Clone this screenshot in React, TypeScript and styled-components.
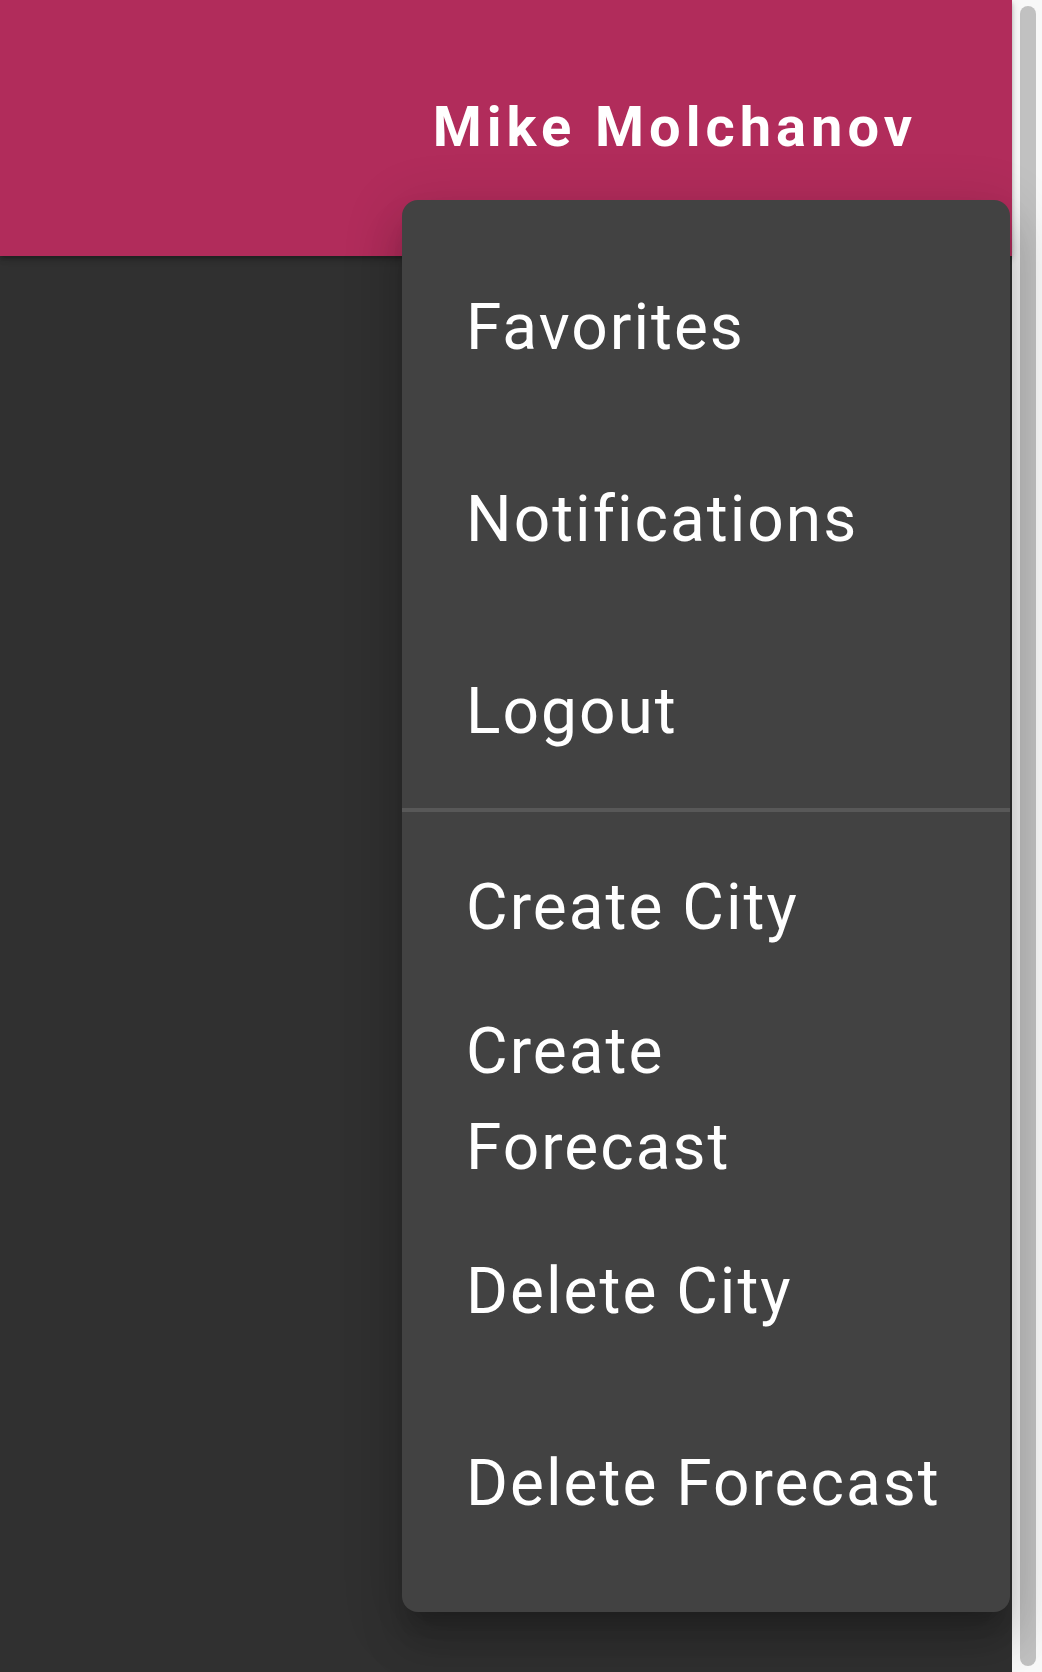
import React from "react";
import styled, { createGlobalStyle } from "styled-components";

const GlobalStyle = createGlobalStyle`
  html, body {
    margin: 0;
    padding: 0;
    height: 100%;
    overflow: hidden;
    background: #303030;
  }
  body {
    font-family: Roboto, "Noto Sans", "Liberation Sans", sans-serif;
    -webkit-font-smoothing: antialiased;
  }
  #root {
    height: 100%;
  }
`;

const Frame = styled.div`
  display: flex;
  height: 100vh;
  width: 100%;
`;

const Viewport = styled.div`
  position: relative;
  flex: 1;
  min-width: 0;
  background: #303030;
`;

const AppBar = styled.header`
  height: 256px;
  display: flex;
  align-items: center;
  justify-content: flex-end;
  padding-right: 95px;
  box-sizing: border-box;
  background: #b12c5b;
  box-shadow: 0 2px 4px -1px rgba(0, 0, 0, 0.2), 0 4px 5px 0 rgba(0, 0, 0, 0.14),
    0 1px 10px 0 rgba(0, 0, 0, 0.12);
`;

const UserName = styled.div`
  color: #ffffff;
  font-size: 56px;
  font-weight: 700;
  letter-spacing: 5px;
  line-height: normal;
  margin-top: -2px;
`;

const MenuPaper = styled.nav`
  position: absolute;
  top: 200px;
  right: 2px;
  width: 608px;
  box-sizing: border-box;
  padding: 32px 0;
  background: #424242;
  border-radius: 16px;
  box-shadow: 0 20px 20px -12px rgba(0, 0, 0, 0.2),
    0 32px 40px 4px rgba(0, 0, 0, 0.14), 0 12px 56px 8px rgba(0, 0, 0, 0.12);
`;

const MenuList = styled.ul`
  list-style: none;
  margin: 0;
  padding: 0;
`;

const MenuItem = styled.li<{ $divider?: boolean }>`
  display: flex;
  align-items: center;
  min-height: 192px;
  box-sizing: content-box;
  padding: 0 64px;
  color: #ffffff;
  font-size: 64px;
  font-weight: 400;
  line-height: 96px;
  letter-spacing: 2px;
  white-space: nowrap;
  border-bottom: ${(p) => (p.$divider ? "4px solid #585858" : "none")};
`;

const ScrollTrack = styled.div`
  width: 30px;
  flex: none;
  display: flex;
  box-sizing: border-box;
  padding: 6px 6px 6px 8px;
  background: #f8f8f8;
`;

const ScrollThumb = styled.div`
  flex: 1;
  background: #c1c1c1;
  border-radius: 8px;
`;

type Item = { label: React.ReactNode; divider?: boolean };

const items: Item[] = [
  { label: "Favorites" },
  { label: "Notifications" },
  { label: "Logout", divider: true },
  { label: "Create City" },
  {
    label: (
      <span>
        Create
        <br />
        Forecast
      </span>
    ),
  },
  { label: "Delete City" },
  { label: "Delete Forecast" },
];

export default function App() {
  return (
    <>
      <GlobalStyle />
      <Frame>
        <Viewport>
          <AppBar>
            <UserName>Mike Molchanov</UserName>
          </AppBar>
          <MenuPaper>
            <MenuList>
              {items.map((it, i) => (
                <MenuItem key={i} $divider={it.divider}>
                  {it.label}
                </MenuItem>
              ))}
            </MenuList>
          </MenuPaper>
        </Viewport>
        <ScrollTrack>
          <ScrollThumb />
        </ScrollTrack>
      </Frame>
    </>
  );
}
